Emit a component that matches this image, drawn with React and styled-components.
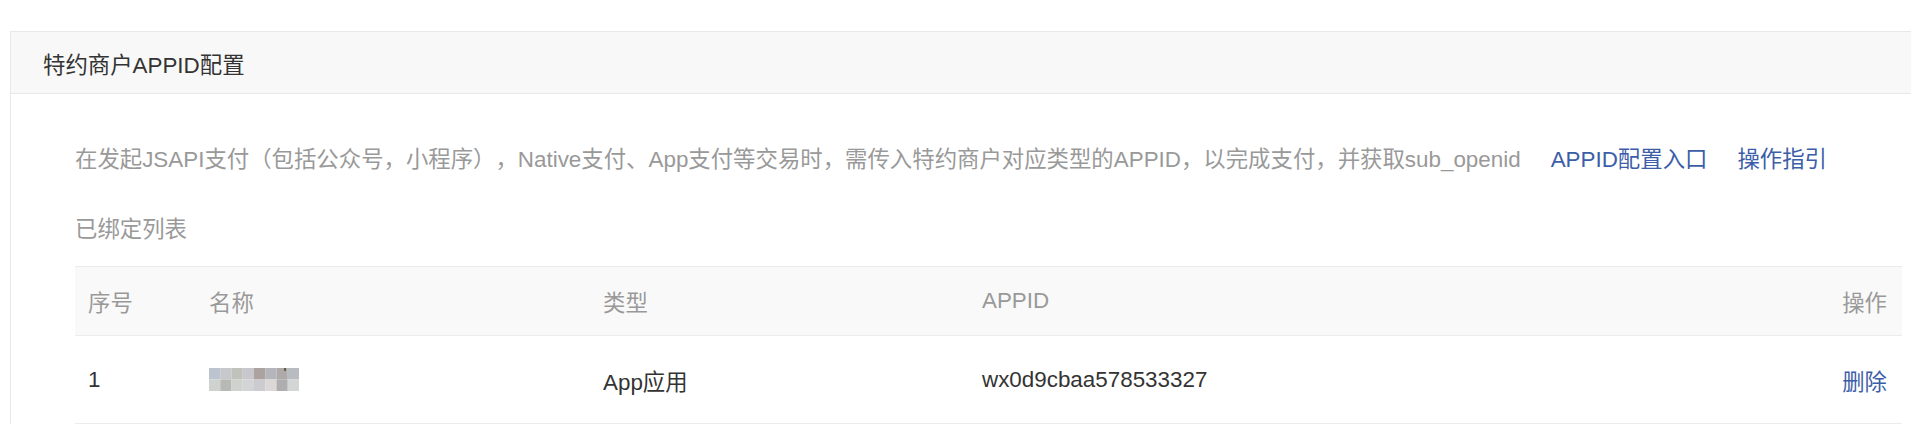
import React from 'react'
import styled, { createGlobalStyle } from 'styled-components'

const GlobalStyle = createGlobalStyle`
    html, body {
        margin: 0;
        padding: 0;
        background: #fff;
        overflow: hidden;
    }
    body {
        font-family: "Liberation Sans", Arial, "Noto Sans CJK SC", sans-serif;
        font-size: 22.4px;
        color: #333;
        text-spacing-trim: space-all;
    }
`

const Page = styled.div`
    padding: 31px 0 0 10px;
`

const Panel = styled.section`
    width: 1956px;
    border: 1px solid #e8e8e8;
    border-bottom: none;
`

const PanelHead = styled.div`
    height: 61px;
    display: flex;
    align-items: center;
    padding-left: 32px;
    background: #f8f8f8;
    border-bottom: 1px solid #e8e8e8;
    color: #333;
`

const PanelBody = styled.div`
    padding: 50px 64px 0 64px;
`

const Desc = styled.p`
    margin: 0;
    display: flex;
    align-items: center;
    gap: 30px;
    line-height: 32px;
    color: #999;
`

const TextLink = styled.a`
    color: #3c5ea8;
    text-decoration: none;
    cursor: pointer;
`

const SubTitle = styled.div`
    margin-top: 38px;
    line-height: 32px;
    color: #999;
`

const Table = styled.div`
    margin-top: 20px;
    width: 1827px;
`

const Row = styled.div`
    display: grid;
    grid-template-columns: 121px 394px 379px 1fr 100px;
    align-items: center;
    height: ${p => (p.$head ? '68px' : '87px')};
    background: ${p => (p.$head ? '#f9f9f9' : '#fff')};
    border-top: ${p => (p.$head ? '1px solid #ececec' : 'none')};
    border-bottom: 1px solid #ececec;
    color: ${p => (p.$head ? '#999' : '#333')};
`

const Cell = styled.div`
    padding-left: ${p => (p.$right ? '0' : '13px')};
    padding-right: ${p => (p.$right ? '15px' : '0')};
    text-align: ${p => (p.$right ? 'right' : 'left')};
    white-space: nowrap;
`

const mosaic = [
    ['#bcc4d0', '#c6c8cc', '#c0c2bc', '#c8c8cc', '#aca2a0', '#b4b6bc', '#aeaaaa', '#b8bcc0'],
    ['#d0d2d0', '#b8b8b4', '#d0d2ce', '#d2d4d6', '#ccccd0', '#dcd8d8', '#aeaeb0', '#d4d6d6'],
]

const Blurred = () => (
    <svg width="90" height="23" viewBox="0 0 90 23" style={{ display: 'block' }}>
        {mosaic.map((line, r) =>
            line.map((c, i) => (
                <rect key={r + '-' + i} x={i * 11.25} y={r * 11.5} width="11.25" height="11.5" fill={c} />
            ))
        )}
        <rect x="75" y="0" width="2" height="3" fill="#6a5a4a" />
    </svg>
)

export default function App() {
    return (
        <Page>
            <GlobalStyle />
            <Panel>
                <PanelHead>特约商户APPID配置</PanelHead>
                <PanelBody>
                    <Desc>
                        <span>在发起JSAPI支付（包括公众号，小程序），Native支付、App支付等交易时，需传入特约商户对应类型的APPID，以完成支付，并获取sub_openid</span>
                        <TextLink>APPID配置入口</TextLink>
                        <TextLink>操作指引</TextLink>
                    </Desc>
                    <SubTitle>已绑定列表</SubTitle>
                    <Table>
                        <Row $head>
                            <Cell>序号</Cell>
                            <Cell>名称</Cell>
                            <Cell>类型</Cell>
                            <Cell>APPID</Cell>
                            <Cell $right>操作</Cell>
                        </Row>
                        <Row>
                            <Cell>1</Cell>
                            <Cell><Blurred /></Cell>
                            <Cell>App应用</Cell>
                            <Cell>wx0d9cbaa578533327</Cell>
                            <Cell $right><TextLink>删除</TextLink></Cell>
                        </Row>
                    </Table>
                </PanelBody>
            </Panel>
        </Page>
    )
}
